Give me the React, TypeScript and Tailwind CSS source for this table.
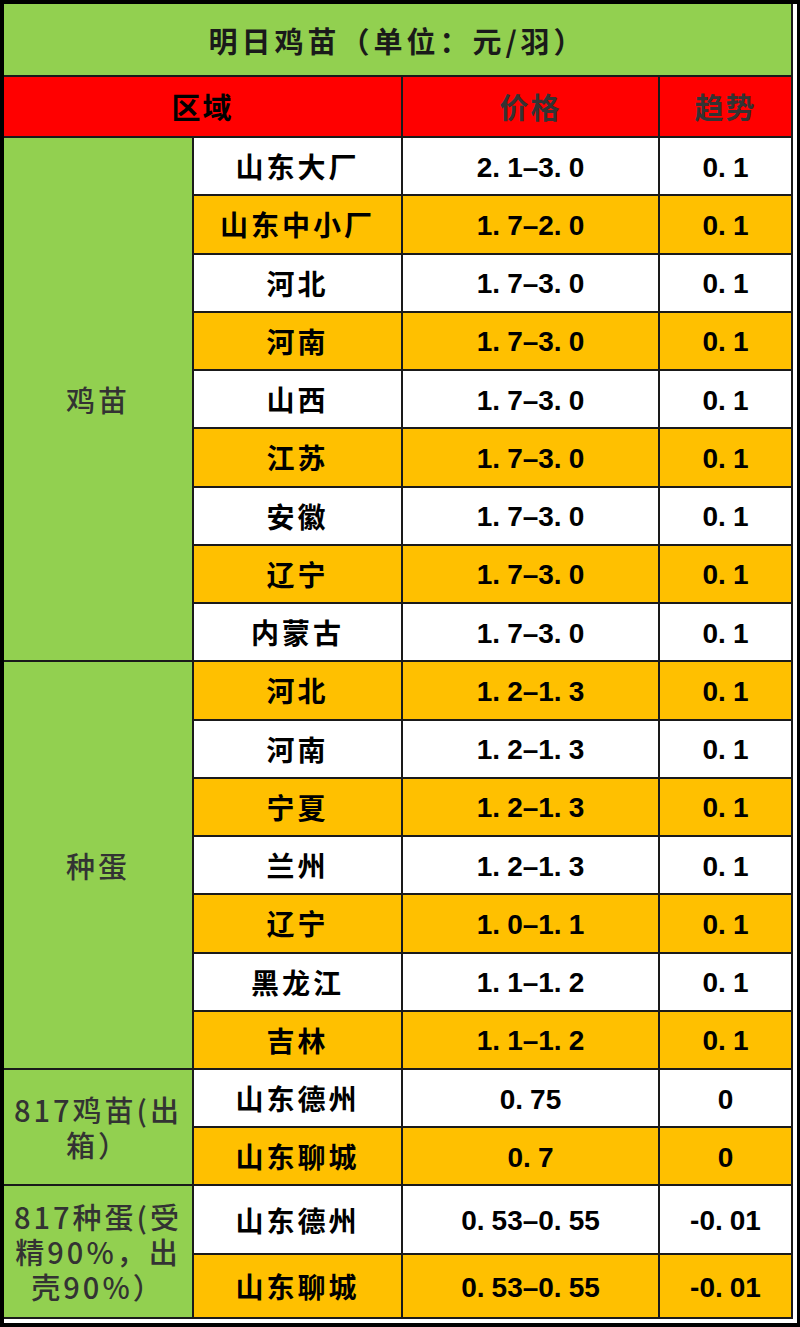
import React from "react";

const CJK = { fontFamily: '"Noto Sans CJK SC", "Noto Sans", sans-serif' };
const NUM = { fontFamily: '"Liberation Sans", Arial, "Noto Sans CJK SC", sans-serif' };

type Row = { name: string; price: string; trend: string };

const group1: Row[] = [
  { name: "山东大厂", price: "2.1–3.0", trend: "0.1" },
  { name: "山东中小厂", price: "1.7–2.0", trend: "0.1" },
  { name: "河北", price: "1.7–3.0", trend: "0.1" },
  { name: "河南", price: "1.7–3.0", trend: "0.1" },
  { name: "山西", price: "1.7–3.0", trend: "0.1" },
  { name: "江苏", price: "1.7–3.0", trend: "0.1" },
  { name: "安徽", price: "1.7–3.0", trend: "0.1" },
  { name: "辽宁", price: "1.7–3.0", trend: "0.1" },
  { name: "内蒙古", price: "1.7–3.0", trend: "0.1" },
];

const group2: Row[] = [
  { name: "河北", price: "1.2–1.3", trend: "0.1" },
  { name: "河南", price: "1.2–1.3", trend: "0.1" },
  { name: "宁夏", price: "1.2–1.3", trend: "0.1" },
  { name: "兰州", price: "1.2–1.3", trend: "0.1" },
  { name: "辽宁", price: "1.0–1.1", trend: "0.1" },
  { name: "黑龙江", price: "1.1–1.2", trend: "0.1" },
  { name: "吉林", price: "1.1–1.2", trend: "0.1" },
];

const group3: Row[] = [
  { name: "山东德州", price: "0.75", trend: "0" },
  { name: "山东聊城", price: "0.7", trend: "0" },
];

const group4: Row[] = [
  { name: "山东德州", price: "0.53–0.55", trend: "-0.01" },
  { name: "山东聊城", price: "0.53–0.55", trend: "-0.01" },
];

function Num({ text }: { text: string }) {
  const parts = text.split(".");
  return (
    <span style={NUM} className="text-[28px] font-bold leading-none text-black whitespace-nowrap pt-[3px]">
      {parts.map((p, i) => (
        <React.Fragment key={i}>
          {p}
          {i < parts.length - 1 && <span className="mr-[7px]">.</span>}
        </React.Fragment>
      ))}
    </span>
  );
}

function DataCells({ row, odd }: { row: Row; odd: boolean }) {
  const bg = odd ? "bg-[#ffc000]" : "bg-white";
  return (
    <>
      <div className={`${bg} flex items-center justify-center`}>
        <span style={CJK} className="text-[28px] font-bold leading-none tracking-[3px] text-black whitespace-nowrap">
          {row.name}
        </span>
      </div>
      <div className={`${bg} flex items-center justify-center`}>
        <Num text={row.price} />
      </div>
      <div className={`${bg} flex items-center justify-center`}>
        <Num text={row.trend} />
      </div>
    </>
  );
}

function GroupLabel({ span, lines }: { span: string; lines: string[] }) {
  return (
    <div className={`${span} bg-[#92d050] flex flex-col items-center justify-center text-center`}>
      {lines.map((l, i) => (
        <div
          key={i}
          style={CJK}
          className="h-[35px] flex items-center justify-center text-[29px] font-medium leading-none tracking-[3px] text-[#333333] whitespace-nowrap"
        >
          {l}
        </div>
      ))}
    </div>
  );
}

export default function App() {
  return (
    <div className="w-[800px] h-[1327px] bg-white border-l-4 border-t-4 border-r-[3px] border-b-4 border-black pr-[4px] pb-[4px]">
      <div className="w-full h-full bg-[#1a1a1a] border-r-2 border-b-2 border-[#1a1a1a] grid grid-cols-[188px_207px_255px_131px] grid-rows-[71px_59px_repeat(16,56.25px)_56px_56px_67px_62px] gap-x-[2px] gap-y-[2px]">
        <div className="col-span-4 bg-[#92d050] flex items-center justify-center">
          <span style={CJK} className="text-[29px] font-bold leading-none tracking-[4px] text-[#1a1a1a] pt-[2px]">
            明日鸡苗（单位：元/羽）
          </span>
        </div>
        <div className="col-span-2 bg-[#ff0000] flex items-center justify-center">
          <span style={CJK} className="text-[29px] font-bold leading-none tracking-[2px] text-black">区域</span>
        </div>
        <div className="bg-[#ff0000] flex items-center justify-center">
          <span style={CJK} className="text-[29px] font-bold leading-none tracking-[2px] text-[#333333]">价格</span>
        </div>
        <div className="bg-[#ff0000] flex items-center justify-center">
          <span style={CJK} className="text-[29px] font-bold leading-none tracking-[2px] text-[#333333]">趋势</span>
        </div>

        <GroupLabel span="row-span-9" lines={["鸡苗"]} />
        {group1.map((r, i) => (
          <DataCells key={"a" + i} row={r} odd={i % 2 === 1} />
        ))}

        <GroupLabel span="row-span-7" lines={["种蛋"]} />
        {group2.map((r, i) => (
          <DataCells key={"b" + i} row={r} odd={i % 2 === 0} />
        ))}

        <GroupLabel span="row-span-2" lines={["817鸡苗(出", "箱）"]} />
        {group3.map((r, i) => (
          <DataCells key={"c" + i} row={r} odd={i % 2 === 1} />
        ))}

        <GroupLabel span="row-span-2" lines={["817种蛋(受", "精90%，出", "壳90%）"]} />
        {group4.map((r, i) => (
          <DataCells key={"d" + i} row={r} odd={i % 2 === 1} />
        ))}
      </div>
    </div>
  );
}
